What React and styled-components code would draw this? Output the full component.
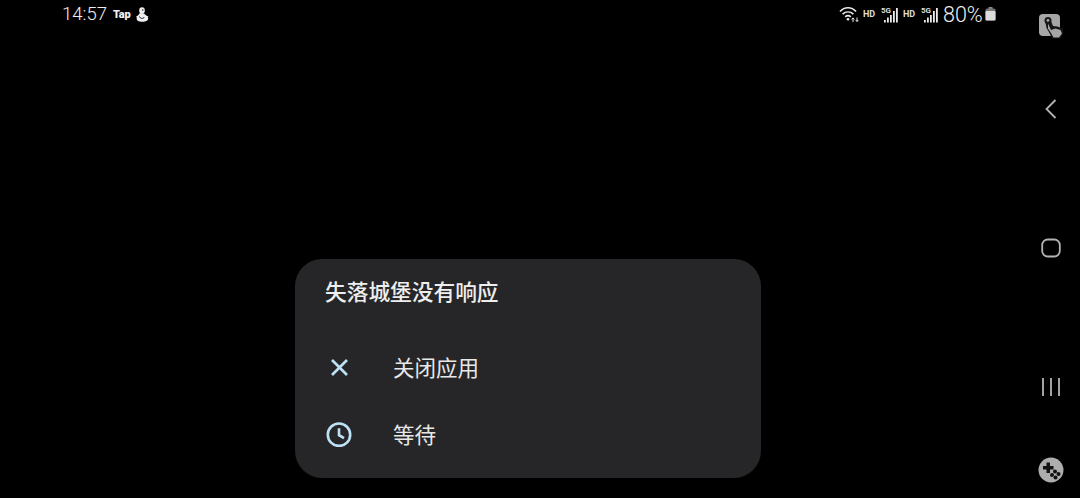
import React from "react";
import styled, { createGlobalStyle } from "styled-components";

const Global = createGlobalStyle`
  html, body { margin: 0; padding: 0; background: #000; }
  #root { width: 1080px; height: 498px; overflow: hidden; }
`;

const Screen = styled.div`
  width: 1080px; height: 498px; display: flex; background: #000; color: #eee;
  font-family: Roboto, "Noto Sans CJK SC", sans-serif;
`;
const Main = styled.div`flex: 1; display: flex; flex-direction: column; min-width: 0;`;
const StatusBar = styled.div`
  height: 28px; display: flex; align-items: center; justify-content: space-between;
  padding: 0 26px 0 62px; flex: none;
`;
const StatusGroup = styled.div`display: flex; align-items: center;`;
const Time = styled.span`font-size: 18.5px; font-weight: 300; color: #efefef; margin-right: 6px;`;
const TapLabel = styled.span`font-size: 11px; font-weight: 900; color: #f2f2f2; letter-spacing: -0.2px; margin-right: 5px;`;
const HdLabel = styled.span`font-size: 9px; font-weight: 700; color: #ddd; margin: 0 6px 0 4px; width: 12px; white-space: nowrap;`;
const Percent = styled.span`font-size: 21.5px; font-weight: 300; color: #efefef; margin: 0 2px 0 4px; width: 40px; white-space: nowrap;`;
const SignalWrap = styled.span`display: inline-flex; width: 18px; height: 20px;`;

const Stage = styled.div`flex: 1; padding: 231px 0 20px 295px; box-sizing: border-box; display: flex;`;
const Dialog = styled.div`
  width: 466px; height: 219px; box-sizing: border-box; background: #262628; border-radius: 27px;
  padding: 17px 30px 0; display: flex; flex-direction: column;
`;
const Title = styled.div`
  font-family: "Noto Sans CJK SC", sans-serif; font-size: 21.7px; font-weight: 500; line-height: 30px;
  color: #eeeeee; margin-bottom: 27px;
`;
const Option = styled.div`display: flex; align-items: center; height: 67px;`;
const OptionIcon = styled.span`width: 68px; display: flex; align-items: center; padding-left: 1px; box-sizing: border-box; color: #bde2f6;`;
const OptionLabel = styled.span`
  font-family: "Noto Sans CJK SC", sans-serif; font-size: 21.5px; font-weight: 400; color: #e8e8e8; line-height: 30px;
`;

const Rail = styled.div`
  width: 58px; flex: none; height: 498px; box-sizing: border-box; padding: 13px 0 15px;
  display: flex; flex-direction: column; align-items: center; justify-content: space-between;
`;
const NavGroup = styled.div`height: 298px; display: flex; flex-direction: column; align-items: center; justify-content: space-between;`;

const Wifi = () => (
  <svg width="20" height="18" viewBox="0 0 20 18" fill="none" stroke="#eaeaea" strokeWidth="1.6">
    <path d="M1 6.500C5.500 1.500 12.500 1.500 17 6.500" /><path d="M3.600 9.200c3.200-3 7.600-3 10.800 0" /><path d="M6.200 11.800c1.800-1.600 3.800-1.600 5.600 0" />
    <circle cx="9" cy="14.300" r="1.300" fill="#eaeaea" stroke="none" />
    <path d="M14 17v-4M12.600 14.400l1.400-1.500 1.400 1.500M18 12.500v4M16.700 15l1.300 1.500 1.300-1.500" strokeWidth="1" />
  </svg>
);
const Signal = () => (
  <SignalWrap>
    <svg width="18" height="20" viewBox="0 0 18 20">
      <text x="0" y="8.500" fontSize="8" fontWeight="700" fontFamily="Roboto" fill="#ddd">5G</text>
      <g fill="#eaeaea">
        <rect x="3" y="16" width="1.800" height="2.500" /><rect x="6" y="13.500" width="1.800" height="5" />
        <rect x="9" y="11" width="1.800" height="7.500" /><rect x="12" y="7" width="1.800" height="11.500" /><rect x="15" y="4" width="1.800" height="14.500" />
      </g>
    </svg>
  </SignalWrap>
);
const Battery = () => (
  <svg width="11" height="14" viewBox="0 0 11 14">
    <rect x="3.500" y="0" width="4" height="2" fill="#888" />
    <rect x="0.500" y="1.500" width="10" height="12" rx="1.500" fill="#777" />
    <rect x="0.500" y="4" width="10" height="9.500" rx="1.200" fill="#dcdcdc" />
  </svg>
);
const Penguin = () => (
  <svg width="14" height="15" viewBox="0 0 14 15" fill="#f0f0f0">
    <ellipse cx="7" cy="3.500" rx="2.800" ry="3.200" />
    <path d="M5 6 2.500 9c-1.500 2-1 4 .5 5 2 1 6.500 1 8.500 0 2-1 2.200-3 .8-4.500L9 6.500z" />
    <path d="M3.500 8.500 1 9.500l1.500 1.500zM10.500 8.500l3 1-1.500 1.500z" />
    <circle cx="7.800" cy="3" r=".7" fill="#000" /><path d="M4.500 9.500c1 2.500 3.500 2.500 5 .5" stroke="#000" strokeWidth=".9" fill="none" />
  </svg>
);
const TouchTool = () => (
  <svg width="26" height="26" viewBox="0 0 26 26">
    <rect x="1" y="1" width="21" height="22" rx="4" fill="#a6a6a6" />
    <circle cx="10" cy="7.500" r="3.500" fill="#161616" /><circle cx="10" cy="7.500" r="1.400" fill="#a6a6a6" />
    <path d="M7.500 9.500 8.500 15l3 5 2.500 5.500h8l3.500-5.500-1-4.500-5-2-4.500-.5-2-5z" fill="#161616" />
    <path d="M10 10.500 13 17l4.500-1.500 5 1.500 1.500 3.500-3 4h-5.500l-2.500-4.500-3-4.500z" fill="#a6a6a6" />
  </svg>
);
const GameTool = () => (
  <svg width="26" height="26" viewBox="0 0 26 26">
    <circle cx="13" cy="13" r="12.500" fill="#adadad" />
    <path d="M8.500 5.500h3.500v3.500h3.500v3.500H12V16H8.500v-3.500H5V9h3.500z" fill="#121212" />
    <circle cx="17" cy="14.500" r="2" fill="#121212" /><circle cx="20.500" cy="17" r="2" fill="#121212" />
    <circle cx="14" cy="18" r="2" fill="#121212" /><circle cx="17.500" cy="20.500" r="2" fill="#121212" />
  </svg>
);

export default function App() {
  return (
    <Screen>
      <Global />
      <Main>
        <StatusBar>
          <StatusGroup>
            <Time>14:57</Time>
            <TapLabel>Tap</TapLabel>
            <Penguin />
          </StatusGroup>
          <StatusGroup>
            <Wifi />
            <HdLabel>HD</HdLabel>
            <Signal />
            <HdLabel>HD</HdLabel>
            <Signal />
            <Percent>80%</Percent>
            <Battery />
          </StatusGroup>
        </StatusBar>
        <Stage>
          <Dialog>
            <Title>失落城堡没有响应</Title>
            <Option>
              <OptionIcon>
                <svg width="26" height="26" viewBox="0 0 26 26" fill="none" stroke="currentColor" strokeWidth="2.700">
                  <path d="M6 6l15 15M21 6L6 21" />
                </svg>
              </OptionIcon>
              <OptionLabel>关闭应用</OptionLabel>
            </Option>
            <Option>
              <OptionIcon>
                <svg width="26" height="26" viewBox="0 0 26 26" fill="none" stroke="currentColor" strokeWidth="2.600">
                  <circle cx="13" cy="13.700" r="11.200" />
                  <path d="M13 7.200V14.200l5 3" />
                </svg>
              </OptionIcon>
              <OptionLabel>等待</OptionLabel>
            </Option>
          </Dialog>
        </Stage>
      </Main>
      <Rail>
        <TouchTool />
        <NavGroup>
          <svg width="20" height="20" viewBox="0 0 20 20" fill="none" stroke="#b4b4b4" strokeWidth="1.800"><path d="M14.500 1L5.500 10l9 9" /></svg>
          <svg width="20" height="20" viewBox="0 0 20 20" fill="none" stroke="#b4b4b4" strokeWidth="1.800"><rect x="1.200" y="1.500" width="17.600" height="17" rx="5.500" /></svg>
          <svg width="20" height="20" viewBox="0 0 20 20" fill="none" stroke="#b4b4b4" strokeWidth="1.800"><path d="M2 1v18M10 1v18M18 1v18" /></svg>
        </NavGroup>
        <GameTool />
      </Rail>
    </Screen>
  );
}
